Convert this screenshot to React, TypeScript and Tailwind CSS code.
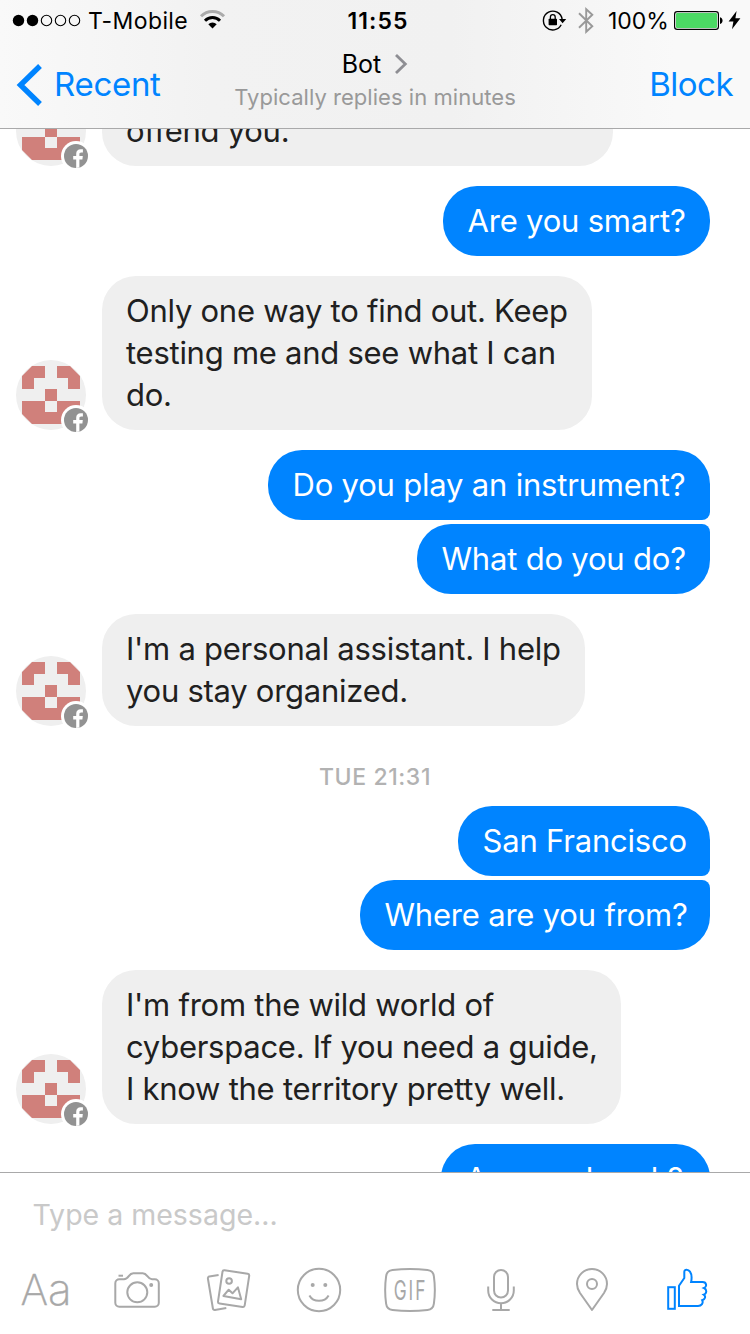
import type { ReactNode } from "react";

function StatusBar() {
  return (
    <div className="flex h-[41px] w-[750px] items-center text-[23px] text-black">
      <div className="flex w-[250px] items-center">
        <svg className="block shrink-0" width="88" height="41" viewBox="0 0 88 41">
          <circle cx="18.5" cy="20.5" r="5.7" />
          <circle cx="32.5" cy="20.5" r="5.7" />
          <g fill="none" stroke="#000" strokeWidth="1.1">
            <circle cx="46.5" cy="20.5" r="5.2" />
            <circle cx="60.5" cy="20.5" r="5.2" />
            <circle cx="74.5" cy="20.5" r="5.2" />
          </g>
        </svg>
        <span className="w-[111px] whitespace-nowrap pt-[1px] tracking-[0.4px]">T-Mobile</span>
        <svg className="block shrink-0" width="28" height="41" viewBox="199 0 28 41">
          <path d="M201 16.2a16.2 16.2 0 0 1 23 0" fill="none" stroke="#ababab" strokeWidth="3" />
          <path d="M205 20.7a10.6 10.6 0 0 1 15 0" fill="none" stroke="#000" strokeWidth="3" />
          <path d="M212.5 28.6l-4.2-4.3a6 6 0 0 1 8.4 0z" />
        </svg>
      </div>
      <div className="w-[255px] pt-[1px] pl-[1px] text-center font-semibold tracking-[1.1px]">11:55</div>
      <div className="flex w-[245px] items-center">
        <svg className="block shrink-0" width="103" height="41" viewBox="505 0 103 41">
          <path d="M561.2 24.800A9.400 9.400 0 1 1 562.100 19.200" fill="none" stroke="#000" strokeWidth="1.4" />
          <path d="M559 19h7.200l-3.600 4.200z" />
          <rect x="548.6" y="18.8" width="8.4" height="6.4" rx=".6" />
          <path d="M550.4 19v-2a2.400 2.400 0 0 1 4.800 0v2" fill="none" stroke="#000" strokeWidth="1.3" />
          <path d="M579 13.3L592.3 26.3 586.2 31.8V9.2L592.3 14.7 579 27.7" fill="none" stroke="#999" strokeWidth="1.9" />
        </svg>
        <span className="w-[66px] whitespace-nowrap pt-[1px]">100%</span>
        <svg className="block shrink-0" width="76" height="41" viewBox="674 0 76 41">
          <rect x="674.6" y="11.6" width="43.8" height="17.8" rx="2.6" fill="#fff" stroke="#000" strokeWidth="1.2" />
          <rect x="676" y="13" width="41" height="15" rx="1.2" fill="#4cd964" />
          <path d="M720 17.3c3.4.6 3.4 6 0 6.6z" />
          <path d="M736.6 11l-8 10.500h4.800L732 29.200l8.400-11h-5z" />
        </svg>
      </div>
    </div>
  );
}

function Header() {
  return (
    <header className="flex h-[129px] shrink-0 flex-col border-b border-[#a9a9aa] bg-[linear-gradient(90deg,#f9f9f9_0%,#f2f2f2_28%,#f1f1f1_60%,#f9f9f9_90%)]">
      <StatusBar />
      <div className="flex h-[87px] items-center text-[33px] text-[#0084ff]">
        <div className="flex w-[200px] items-center">
          <svg className="block shrink-0" width="54" height="48" viewBox="0 60 54 48">
            <path d="M40 65L20.500 84l19.500 19" fill="none" stroke="#0084ff" strokeWidth="5.4" />
          </svg>
          <span className="tracking-[-0.3px]">Recent</span>
        </div>
        <div className="flex h-full w-[350px] flex-col items-center gap-[3px] pt-[8px]">
          <div className="flex h-[30px] items-center gap-[13px] text-[25px] leading-[30px] text-black">
            <span>Bot</span>
            <svg className="block" width="14" height="22" viewBox="0 0 14 22">
              <path d="M2 2l9.300 9L2 20" fill="none" stroke="#8e8e93" strokeWidth="2.8" />
            </svg>
          </div>
          <div className="whitespace-nowrap text-[22px] leading-[30px] tracking-[0.04px] text-[#999]">
            Typically replies in minutes
          </div>
        </div>
        <div className="flex w-[200px] justify-end pr-[17px] tracking-[-0.5px]">Block</div>
      </div>
    </header>
  );
}

function Avatar() {
  return (
    <svg className="-mb-[4px] block shrink-0" width="102" height="76" viewBox="0 358 102 76">
      <circle cx="51" cy="395" r="35" fill="#efefef" />
      <path
        d="M32 366h13v12H34v11H22V376zM57 366h13l10 10v13H68V378H57zM45 389h12v12H45zM22 401h23v11h12v-11h23v23H32L22 414z"
        fill="#d0807b"
      />
      <circle cx="76" cy="420" r="15" fill="#fff" />
      <circle cx="76" cy="420" r="12" fill="#929292" />
      <path
        d="M76.2 432v-8.400h-3V420h3v-2.200c0-3 1.800-4.500 4.400-4.500h2.300v3.300h-1.600c-1.500 0-1.900.7-1.900 1.800v1.600h3.400l-.4 3.600h-3v8z"
        fill="#fff"
      />
    </svg>
  );
}

function Received({ lines, className }: { lines: string[]; className: string }) {
  return (
    <div className="flex items-end">
      <Avatar />
      <div className={`rounded-[34px] bg-[#efefef] py-[14px] pl-[24px] tracking-[-0.26px] text-[#202020] ${className}`}>
        {lines.map((line) => (
          <div key={line} className="whitespace-nowrap">{line}</div>
        ))}
      </div>
    </div>
  );
}

function Sent({ children, className }: { children: ReactNode; className: string }) {
  return (
    <div className={`mr-[40px] self-end whitespace-nowrap bg-[#0084ff] py-[14px] pl-[24.5px] tracking-[-0.2px] text-white ${className}`}>
      {children}
    </div>
  );
}

function Messages() {
  return (
    <main className="h-[1043px] shrink-0 overflow-hidden text-[31px] leading-[42px]">
      <div className="-mt-[35px] flex flex-col gap-[20px]">
        <Received lines={["offend you."]} className="w-[511px]" />
        <Sent className="w-[267px] rounded-[34px]">Are you smart?</Sent>
        <Received
          lines={["Only one way to find out. Keep", "testing me and see what I can", "do."]}
          className="w-[490px]"
        />
        <div className="flex flex-col gap-[4px]">
          <Sent className="w-[442px] rounded-[34px] rounded-br-[8px]">Do you play an instrument?</Sent>
          <Sent className="w-[293px] rounded-[34px] rounded-tr-[8px]">What do you do?</Sent>
        </div>
        <Received lines={["I'm a personal assistant. I help", "you stay organized."]} className="w-[483px]" />
        <div className="h-[40px] pt-[11px] text-center text-[23px] font-medium leading-[40px] -mt-[0px] tracking-[0.6px] text-[#b2b2b2]">
          <div className="h-[29px]">TUE 21:31</div>
        </div>
        <div className="flex flex-col gap-[4px]">
          <Sent className="w-[252px] rounded-[34px] rounded-br-[8px]">San Francisco</Sent>
          <Sent className="w-[350px] rounded-[34px] rounded-tr-[8px]">Where are you from?</Sent>
        </div>
        <Received
          lines={["I'm from the wild world of", "cyberspace. If you need a guide,", "I know the territory pretty well."]}
          className="w-[519px]"
        />
        <Sent className="w-[269px] rounded-[34px]">Are you break?</Sent>
      </div>
    </main>
  );
}

function Tool({ x, width = 91, color = "#a8a8a8", children }: { x: number; width?: number; color?: string; children: ReactNode }) {
  return (
    <svg
      className="block shrink-0"
      width={width}
      height="84"
      viewBox={`${x} 1250 ${width} 84`}
      fill="none"
      stroke={color}
      strokeWidth="2"
      strokeLinejoin="round"
    >
      {children}
    </svg>
  );
}

function Composer() {
  return (
    <footer className="flex h-[162px] shrink-0 flex-col border-t border-[#a9a9aa] bg-white">
      <div className="h-[77px] pl-[32.5px] text-[28.5px] leading-[84px] text-[#c9c9c9]">Type a message...</div>
      <div className="flex h-[84px]">
        <Tool x={0}>
          <text x="20.5" y="1304.5" fill="#a8a8a8" stroke="#a8a8a8" strokeWidth="0.4" fontWeight="200" fontSize="42">
            A<tspan fontSize="44">a</tspan>
          </text>
        </Tool>
        <Tool x={91}>
          <path d="M119.8 1279.2H124c5.200 0 4.300-6 9.300-6h9.400c5 0 4.300 6 9.300 6h2.800a4 4 0 0 1 4 4v19.600a4 4 0 0 1-4 4h-35.500a4 4 0 0 1-4-4v-19.600a4 4 0 0 1 4-4z" />
          <path d="M118.5 1275.7h4.500" />
          <circle cx="137.3" cy="1292.3" r="10" />
          <circle cx="151.2" cy="1285" r="2" fill="#a8a8a8" stroke="none" />
        </Tool>
        <Tool x={182}>
          <path d="M218.6 1275l-9.300 1.500a1.700 1.700 0 0 0-1.400 2l5 30a1.700 1.700 0 0 0 2 1.400l11.400-1.800" />
          <rect x="220.1" y="1271.8" width="27" height="33.6" rx="1.8" transform="rotate(8.6 233.6 1288.6)" />
          <circle cx="229.1" cy="1281" r="2.8" />
          <path d="M223.4 1296l5.300-6.300 3.800 3.600 5.400-6 3.300 12z" />
        </Tool>
        <Tool x={273}>
          <circle cx="319" cy="1290" r="21.2" />
          <circle cx="312.7" cy="1285" r="2" fill="#a8a8a8" stroke="none" />
          <circle cx="325.3" cy="1285" r="2" fill="#a8a8a8" stroke="none" />
          <path d="M309.4 1295.4c4 7.200 15.200 7.200 19.200 0" />
        </Tool>
        <Tool x={364}>
          <path d="M392.5 1270Q410 1268.2 427.5 1270Q433.2 1270.6 433.9 1276.3Q435.8 1290 433.9 1303.7Q433.2 1309.4 427.5 1310Q410 1311.8 392.5 1310Q386.8 1309.4 386.1 1303.7Q384.2 1290 386.1 1276.3Q386.8 1270.6 392.5 1270Z" />
          <text
            transform="translate(393.8 1300) scale(0.64 1)"
            fill="#a8a8a8"
            stroke="none"
            fontSize="27"
            letterSpacing="3"
          >
            GIF
          </text>
        </Tool>
        <Tool x={455}>
          <rect x="494" y="1270" width="14" height="27.6" rx="7" />
          <path d="M488.2 1286.5v4a12.800 12.800 0 0 0 25.600 0v-4M501 1303.5v6.500M492.3 1310h17.400" />
        </Tool>
        <Tool x={546}>
          <path d="M592 1310L580 1293c-2-3-3-6-3-9a15 15 0 0 1 30 0c0 3-1 6-3 9z" />
          <circle cx="592" cy="1284" r="5" />
        </Tool>
        <Tool x={637} width={113} color="#0084ff">
          <g strokeLinejoin="miter">
            <rect x="668.2" y="1287.2" width="6.6" height="21.6" />
            <path d="M679 1306v-20.300l5.300-7.700v-6c0-3.400 4.200-2.500 5.700-.4 2.400 3.400 1.800 7 1.100 10.400h11.400c4.400 0 4.600 4.800 1.500 6 3.300 1.500 2.800 5.600-.3 6.600 2.500 1.700 1.400 5-1.500 5.600 1.400 2.800-.6 5.800-4.200 5.800z" />
          </g>
        </Tool>
      </div>
    </footer>
  );
}

export default function App() {
  return (
    <div className="flex h-[1334px] w-[750px] flex-col overflow-hidden bg-white font-['Inter','Liberation_Sans',sans-serif]">
      <Header />
      <Messages />
      <Composer />
    </div>
  );
}
